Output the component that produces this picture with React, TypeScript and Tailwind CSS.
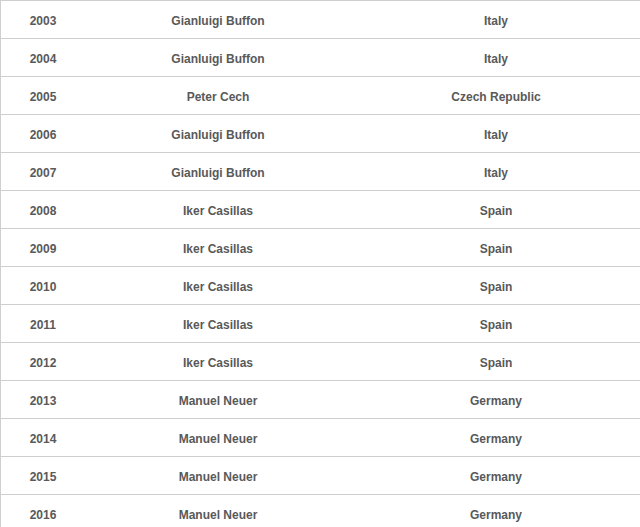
const rows: [string, string, string][] = [
  ["2003", "Gianluigi Buffon", "Italy"],
  ["2004", "Gianluigi Buffon", "Italy"],
  ["2005", "Peter Cech", "Czech Republic"],
  ["2006", "Gianluigi Buffon", "Italy"],
  ["2007", "Gianluigi Buffon", "Italy"],
  ["2008", "Iker Casillas", "Spain"],
  ["2009", "Iker Casillas", "Spain"],
  ["2010", "Iker Casillas", "Spain"],
  ["2011", "Iker Casillas", "Spain"],
  ["2012", "Iker Casillas", "Spain"],
  ["2013", "Manuel Neuer", "Germany"],
  ["2014", "Manuel Neuer", "Germany"],
  ["2015", "Manuel Neuer", "Germany"],
  ["2016", "Manuel Neuer", "Germany"],
];

export default function App() {
  return (
    <div className="h-[527px] w-[640px] overflow-hidden bg-white font-['Liberation_Sans',Arial,sans-serif]">
      <div className="border-l border-[#cfcfcf]">
        {rows.map(([year, name, country]) => (
          <div
            key={year}
            className="grid h-[38px] grid-cols-[84px_266px_290px] items-center border-t border-[#cfcfcf] pt-[2px] text-center text-[12px] font-bold text-[#595959]"
          >
            <div>{year}</div>
            <div>{name}</div>
            <div>{country}</div>
          </div>
        ))}
      </div>
    </div>
  );
}
